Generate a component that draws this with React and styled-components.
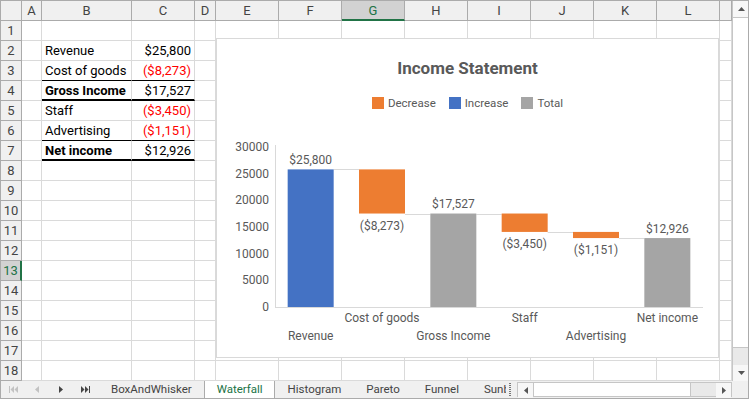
import React from "react";
import styled, { createGlobalStyle } from "styled-components";

const GlobalStyle = createGlobalStyle`
  html, body {
    margin: 0;
    padding: 0;
    background: #fff;
    overflow: hidden;
  }
  body {
    font-family: Roboto, "Liberation Sans", sans-serif;
  }
  * {
    box-sizing: border-box;
  }
`;

const GREEN = "#217346";
const HEAD_LINE = "#ababab";
const GRID_LINE = "#dadada";

const COLUMNS = [
  { key: "A", w: 20 },
  { key: "B", w: 90 },
  { key: "C", w: 63 },
  { key: "D", w: 21 },
  { key: "E", w: 63 },
  { key: "F", w: 63 },
  { key: "G", w: 63, selected: true },
  { key: "H", w: 63 },
  { key: "I", w: 63 },
  { key: "J", w: 63 },
  { key: "K", w: 63 },
  { key: "L", w: 63 },
  { key: "", w: 12 },
];

const TABLE = {
  2: { label: "Revenue", value: 25800 },
  3: { label: "Cost of goods", value: -8273, rule: "thin" },
  4: { label: "Gross Income", value: 17527, bold: true, rule: "thick" },
  5: { label: "Staff", value: -3450 },
  6: { label: "Advertising", value: -1151, rule: "thin" },
  7: { label: "Net income", value: 12926, bold: true, rule: "thick" },
};

const STEPS = [
  { label: "Revenue", value: 25800, kind: "increase" },
  { label: "Cost of goods", value: -8273, kind: "decrease" },
  { label: "Gross Income", value: 17527, kind: "total" },
  { label: "Staff", value: -3450, kind: "decrease" },
  { label: "Advertising", value: -1151, kind: "decrease" },
  { label: "Net income", value: 12926, kind: "total" },
];

const COLORS = { decrease: "#ED7D31", increase: "#4472C4", total: "#A5A5A5" };

const TABS = ["BoxAndWhisker", "Waterfall", "Histogram", "Pareto", "Funnel", "Sunburst"];

const fmt = (v) =>
  v < 0 ? `($${Math.abs(v).toLocaleString("en-US")})` : `$${v.toLocaleString("en-US")}`;

/* ---------- window ---------- */

const Window = styled.div`
  width: 749px;
  height: 399px;
  border: 1px solid ${HEAD_LINE};
  display: grid;
  grid-template-columns: 731px 16px;
  grid-template-rows: 380px 17px;
  background: #f0f0f0;
  overflow: hidden;
`;

const Sheet = styled.div`
  position: relative;
  display: grid;
  grid-template-columns: 21px ${COLUMNS.map((c) => `${c.w}px`).join(" ")};
  grid-template-rows: repeat(19, 20px);
  background: #fff;
  overflow: hidden;
`;

const Corner = styled.div`
  background: #f0f0f0;
  border-right: 1px solid ${HEAD_LINE};
  border-bottom: 1px solid ${HEAD_LINE};
`;

const ColHead = styled.div`
  background: ${(p) => (p.$selected ? "#d2d2d2" : "#f0f0f0")};
  border-right: 1px solid ${HEAD_LINE};
  border-bottom: ${(p) => (p.$selected ? `2px solid ${GREEN}` : `1px solid ${HEAD_LINE}`)};
  color: ${(p) => (p.$selected ? GREEN : "#444")};
  font-size: 13px;
  line-height: 19px;
  text-align: center;
  overflow: hidden;
`;

const RowHead = styled.div`
  background: ${(p) => (p.$selected ? "#d2d2d2" : "#f0f0f0")};
  border-right: ${(p) => (p.$selected ? `2px solid ${GREEN}` : `1px solid ${HEAD_LINE}`)};
  border-bottom: 1px solid ${HEAD_LINE};
  color: ${(p) => (p.$selected ? GREEN : "#444")};
  font-size: 13px;
  line-height: 19px;
  text-align: center;
`;

const ruleFor = (rule) =>
  rule === "thick" ? "2px solid #000" : rule === "thin" ? "1px solid #000" : `1px solid ${GRID_LINE}`;

const Cell = styled.div`
  border-right: 1px solid ${GRID_LINE};
  border-bottom: ${(p) => ruleFor(p.$rule)};
  padding: 0 3px;
  font-size: 13px;
  line-height: 19px;
  white-space: nowrap;
  text-align: ${(p) => p.$align || "left"};
  color: ${(p) => (p.$negative ? "#ff0000" : "#000")};
  font-weight: ${(p) => (p.$bold ? 700 : 400)};
`;

/* ---------- chart ---------- */

const ChartFrame = styled.div`
  position: absolute;
  left: 215px;
  top: 37px;
  width: 503px;
  height: 320px;
  background: #fff;
  border: 1px solid #d9d9d9;
  display: flex;
  flex-direction: column;
  align-items: center;
  color: #595959;
`;

const ChartTitle = styled.div`
  margin-top: 19px;
  font-size: 17px;
  line-height: 20px;
  font-weight: 700;
`;

const Legend = styled.div`
  margin-top: 18px;
  display: flex;
  gap: 13px;
  font-size: 11.5px;
  line-height: 14px;
`;

const LegendItem = styled.div`
  display: flex;
  align-items: center;
  gap: 4px;
`;

const Swatch = styled.span`
  width: 12px;
  height: 12px;
  background: ${(p) => p.$color};
`;

const Plot = styled.svg`
  display: block;
  font-family: Roboto, "Liberation Sans", sans-serif;
  font-size: 12px;
`;

const X0 = 275;
const X1 = 703;
const Y0 = 307;
const YH = 160;
const MAX = 30000;
const BAR = 46;
const band = (X1 - X0) / STEPS.length;
const yOf = (v) => Y0 - (v / MAX) * YH;

const Waterfall = () => {
  let run = 0;
  const bars = STEPS.map((s, i) => {
    let lo;
    let hi;
    if (s.kind === "total") {
      lo = 0;
      hi = s.value;
      run = s.value;
    } else {
      const next = run + s.value;
      lo = Math.min(run, next);
      hi = Math.max(run, next);
      run = next;
    }
    const cx = X0 + band * (i + 0.5);
    return { ...s, cx, x: cx - BAR / 2, top: yOf(hi), bottom: yOf(lo), end: run };
  });

  return (
    <Plot width="501" height="247" viewBox="217 110 501 247">
      {[0, 5000, 10000, 15000, 20000, 25000, 30000].map((v) => (
        <text key={v} x="269" y={yOf(v)} textAnchor="end" dominantBaseline="central" fill="#595959">
          {v}
        </text>
      ))}
      <line x1={X0 + 0.5} y1={yOf(MAX) - 2} x2={X0 + 0.5} y2={Y0} stroke="#d9d9d9" />
      <line x1={X0} y1={Y0 + 0.5} x2={X1} y2={Y0 + 0.5} stroke="#d9d9d9" />
      {bars.slice(0, -1).map((b, i) => (
        <line
          key={`c${i}`}
          x1={b.x + BAR}
          x2={bars[i + 1].x}
          y1={Math.round(yOf(b.end)) + 0.5}
          y2={Math.round(yOf(b.end)) + 0.5}
          stroke="#d9d9d9"
        />
      ))}
      {bars.map((b) => (
        <rect
          key={b.label}
          x={b.x}
          y={b.top}
          width={BAR}
          height={b.bottom - b.top}
          fill={COLORS[b.kind]}
        />
      ))}
      {bars.map((b) => (
        <text
          key={`l${b.label}`}
          x={b.cx}
          y={b.kind === "decrease" ? b.bottom + 12 : b.top - 9.5}
          textAnchor="middle"
          dominantBaseline="central"
          fill="#595959"
        >
          {fmt(b.value)}
        </text>
      ))}
      {bars.map((b, i) => (
        <text
          key={`x${b.label}`}
          x={b.cx}
          y={i % 2 === 0 ? 336 : 318}
          textAnchor="middle"
          dominantBaseline="central"
          fill="#595959"
        >
          {b.label}
        </text>
      ))}
    </Plot>
  );
};

const IncomeChart = () => (
  <ChartFrame>
    <ChartTitle>Income Statement</ChartTitle>
    <Legend>
      <LegendItem>
        <Swatch $color={COLORS.decrease} />
        Decrease
      </LegendItem>
      <LegendItem>
        <Swatch $color={COLORS.increase} />
        Increase
      </LegendItem>
      <LegendItem>
        <Swatch $color={COLORS.total} />
        Total
      </LegendItem>
    </Legend>
    <Waterfall />
  </ChartFrame>
);

/* ---------- sheet tabs & scrollbars ---------- */

const TabBar = styled.div`
  display: flex;
  align-items: stretch;
  background: #f0f0f0;
  font-size: 11.5px;
  color: #444;
`;

const NavGroup = styled.div`
  display: flex;
  width: 97px;
  flex: none;
`;

const NavButton = styled.div`
  width: 24px;
  display: flex;
  align-items: center;
  justify-content: center;
  color: ${(p) => (p.$disabled ? "#c2c2c2" : "#444")};
`;

const TabStrip = styled.div`
  display: flex;
  width: 408px;
  flex: none;
  overflow: hidden;
`;

const Tab = styled.div`
  flex: none;
  padding: 0 11px 0 12px;
  line-height: 17px;
  white-space: nowrap;
  background: ${(p) => (p.$active ? "#fff" : "transparent")};
  color: ${(p) => (p.$active ? GREEN : "#444")};
  border-left: 1px solid ${(p) => (p.$active ? HEAD_LINE : "transparent")};
  border-right: 1px solid ${(p) => (p.$active ? HEAD_LINE : "transparent")};
`;

const Splitter = styled.div`
  width: 11px;
  flex: none;
  display: flex;
  justify-content: center;
  padding-right: 3px;
  &::before {
    content: "";
    width: 2px;
    margin: 2px 0 1px;
    background: repeating-linear-gradient(to bottom, #777 0 1px, transparent 1px 2px);
  }
`;

const HScroll = styled.div`
  flex: 1;
  display: flex;
  margin: 1px 0 1px;
  border: 1px solid #c6c6c6;
  background: #e9e9e9;
`;

const ArrowBox = styled.div`
  width: ${(p) => p.$size || 15}px;
  height: ${(p) => p.$size || 15}px;
  flex: none;
  display: flex;
  align-items: center;
  justify-content: center;
  background: #f7f7f7;
  color: #555;
`;

const HThumb = styled.div`
  width: 158px;
  flex: none;
  background: #fff;
  border: 1px solid #c6c6c6;
  margin: -1px 0;
`;

const Track = styled.div`
  flex: 1;
`;

const VScroll = styled.div`
  display: flex;
  flex-direction: column;
  background: #e9e9e9;
  border-left: 1px solid #c6c6c6;
`;

const VThumb = styled.div`
  height: 331px;
  flex: none;
  background: #fff;
  border: 1px solid #c6c6c6;
  margin: 0 -1px;
`;

const CornerBox = styled.div`
  background: #f0f0f0;
`;

const Arrow = ({ dir }) => {
  const pts = {
    up: "0,4 3.5,0 7,4",
    down: "0,0 3.5,4 7,0",
    left: "4,0 0,3.5 4,7",
    right: "0,0 4,3.5 0,7",
  }[dir];
  const vertical = dir === "up" || dir === "down";
  return (
    <svg width={vertical ? 7 : 4} height={vertical ? 4 : 7} viewBox={vertical ? "0 0 7 4" : "0 0 4 7"}>
      <polygon points={pts} fill="currentColor" />
    </svg>
  );
};

const FirstIcon = () => (
  <svg width="9" height="7" viewBox="0 0 9 7">
    <rect x="0" y="0" width="1" height="7" fill="currentColor" />
    <polygon points="5,0 1.5,3.5 5,7" fill="currentColor" />
    <polygon points="9,0 5.5,3.5 9,7" fill="currentColor" />
  </svg>
);

const LastIcon = () => (
  <svg width="9" height="7" viewBox="0 0 9 7">
    <polygon points="0,0 3.5,3.5 0,7" fill="currentColor" />
    <polygon points="4,0 7.5,3.5 4,7" fill="currentColor" />
    <rect x="8" y="0" width="1" height="7" fill="currentColor" />
  </svg>
);

const SheetTabs = () => (
  <TabBar>
    <NavGroup>
      <NavButton $disabled>
        <FirstIcon />
      </NavButton>
      <NavButton $disabled>
        <Arrow dir="left" />
      </NavButton>
      <NavButton>
        <Arrow dir="right" />
      </NavButton>
      <NavButton>
        <LastIcon />
      </NavButton>
    </NavGroup>
    <TabStrip>
      {TABS.map((t) => (
        <Tab key={t} $active={t === "Waterfall"}>
          {t}
        </Tab>
      ))}
    </TabStrip>
    <Splitter />
    <HScroll>
      <ArrowBox>
        <Arrow dir="left" />
      </ArrowBox>
      <HThumb />
      <Track />
      <ArrowBox>
        <Arrow dir="right" />
      </ArrowBox>
    </HScroll>
  </TabBar>
);

const App = () => {
  const rows = Array.from({ length: 18 }, (_, i) => i + 1);
  return (
    <>
      <GlobalStyle />
      <Window>
        <Sheet>
          <Corner />
          {COLUMNS.map((c, i) => (
            <ColHead key={`h${i}`} $selected={c.selected}>
              {c.key}
            </ColHead>
          ))}
          {rows.map((r) => {
            const d = TABLE[r];
            return (
              <React.Fragment key={r}>
                <RowHead $selected={r === 13}>{r}</RowHead>
                {COLUMNS.map((c, i) => {
                  if (d && c.key === "B") {
                    return (
                      <Cell key={i} $bold={d.bold} $rule={d.rule}>
                        {d.label}
                      </Cell>
                    );
                  }
                  if (d && c.key === "C") {
                    return (
                      <Cell key={i} $align="right" $negative={d.value < 0} $rule={d.rule}>
                        {fmt(d.value)}
                      </Cell>
                    );
                  }
                  return <Cell key={i} />;
                })}
              </React.Fragment>
            );
          })}
          <IncomeChart />
        </Sheet>
        <VScroll>
          <ArrowBox $size={16}>
            <Arrow dir="up" />
          </ArrowBox>
          <VThumb />
          <Track />
          <ArrowBox $size={16}>
            <Arrow dir="down" />
          </ArrowBox>
        </VScroll>
        <SheetTabs />
        <CornerBox />
      </Window>
    </>
  );
};

export default App;
